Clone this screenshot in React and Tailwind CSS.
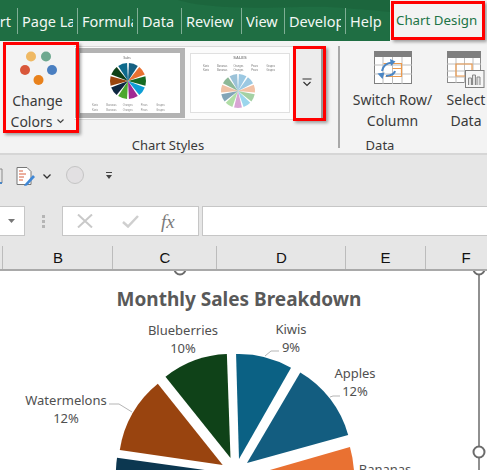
import React from "react";

const pt = (cx, cy, r, deg) => {
  const a = (deg * Math.PI) / 180;
  return [cx + r * Math.sin(a), cy - r * Math.cos(a)];
};
const slice = (cx, cy, r, a0, a1) => {
  const [x0, y0] = pt(cx, cy, r, a0);
  const [x1, y1] = pt(cx, cy, r, a1);
  return `M${cx} ${cy}L${x0.toFixed(2)} ${y0.toFixed(2)}A${r} ${r} 0 0 1 ${x1.toFixed(2)} ${y1.toFixed(2)}Z`;
};

const tabs = [
  { t: "Insert", w: "w-[18px]", first: true },
  { t: "Page Layout", w: "w-[60px]" },
  { t: "Formulas", w: "w-[60px]" },
  { t: "Data", w: "w-[44px]" },
  { t: "Review", w: "w-[60px]" },
  { t: "View", w: "w-[43px]" },
  { t: "Developer", w: "w-[61px]" },
  { t: "Help", w: "w-[45px]" },
];

function MiniPie({ cx, cy, r, colors, striped }) {
  const n = colors.length;
  const gap = 6;
  return colors.map((c, i) => {
    const a0 = (i * 360) / n + gap / 2;
    const a1 = ((i + 1) * 360) / n - gap / 2;
    return <path key={i} d={slice(cx, cy, r, a0, a1)} fill={c} opacity={striped ? 0.7 : 1} />;
  });
}

const legend = ["Kiwis", "Bananas", "Oranges", "Pears", "Grapes"];

function Thumb1() {
  return (
    <svg width="98" height="60" viewBox="82 55 98 60" className="block">
      <g filter="url(#b1)">
        <text x="128" y="60" fontSize="3" textAnchor="middle" fill="#666" fontFamily="Liberation Sans, sans-serif">Sales</text>
        <MiniPie cx={129} cy={82} r={18} colors={["#156082", "#e97132", "#196b24", "#0f9ed5", "#a02b93", "#4ea72e", "#0e2841", "#9a4410", "#0f4018", "#0d6a8c"]} />
        {legend.map((t, i) => (
          <g key={t} fontSize="2.6" fill="#888" textAnchor="middle" fontFamily="Liberation Sans, sans-serif">
            <text x={96 + i * 16.4} y="107">{t}</text>
            <text x={96 + i * 16.4} y="112">{t}</text>
          </g>
        ))}
      </g>
    </svg>
  );
}

function Thumb2() {
  return (
    <svg width="98" height="58" viewBox="191 56 98 58" className="block">
      <g filter="url(#b1)">
        <text x="240" y="61" fontSize="4" fontWeight="700" textAnchor="middle" fill="#8a8a8a" fontFamily="Liberation Sans, sans-serif">SALES</text>
        {legend.map((t, i) => (
          <g key={t} fontSize="2.6" fill="#777" textAnchor="middle" fontFamily="Liberation Sans, sans-serif">
            <text x={206 + i * 16.2} y="69">{t}</text>
            <text x={206 + i * 16.2} y="73">{t}</text>
          </g>
        ))}
        <MiniPie cx={238} cy={93} r={17} striped colors={["#6fb0d6", "#6fb0d6", "#eda77f", "#7dbd7d", "#70c4e6", "#c77fc2", "#8fcf80", "#4f7f99", "#e8a67f", "#5d9a6b", "#6fa8c8"]} />
      </g>
    </svg>
  );
}

function SwitchIcon() {
  return (
    <svg width="38" height="33" viewBox="0 0 38 33" className="block">
      <rect x="0.5" y="0.5" width="37" height="32" fill="#fff" stroke="#7f7f7f" />
      <rect x="0" y="0" width="38" height="6" fill="#7f7f7f" />
      <path d="M0 14H38M0 23H38M9 6V33M18.500 6V33M28 6V33" stroke="#bdbdbd" fill="none" />
      <path d="M9.500 12.500H27.500V25.500H11.500M18.500 17.500H27.500" stroke="#ed9a4c" strokeWidth="1.200" fill="none" />
      <path d="M8 20C9 15 13 12 18 11.500" stroke="#4a86c5" strokeWidth="2" fill="none" />
      <path d="M16 8L21.500 10.500L17 15Z" fill="#4a86c5" />
      <path d="M21 20C20.500 23 17 24.500 12 25" stroke="#4a86c5" strokeWidth="2" fill="none" />
      <path d="M4.500 20.500L11.500 19.500L9.500 26Z" fill="#4a86c5" transform="translate(-1 2)" />
    </svg>
  );
}

function SelectIcon() {
  return (
    <svg width="38" height="37" viewBox="0 0 38 37" className="block">
      <rect x="0.500" y="0.500" width="33" height="31" fill="#fff" stroke="#8a8a8a" />
      <rect x="0" y="0" width="34" height="7" fill="#7f7f7f" />
      <path d="M0 13H34M0 20H34M0 26H34M9 7V32M17.500 7V32M26 7V32" stroke="#bdbdbd" fill="none" />
      <path d="M9 13H25V25H9Z" stroke="#ed9a4c" strokeWidth="1.200" fill="none" />
      <rect x="18.500" y="19.500" width="18.500" height="17" fill="#f6f6f6" stroke="#7f7f7f" />
      <path d="M21.500 34V27H24.500V34M25.500 34V24H28.500V34M30 34V26H33V34" stroke="#8a8a8a" fill="#e3e3e3" />
    </svg>
  );
}

function ColorsIcon() {
  return (
    <svg width="40" height="38" viewBox="0 0 40 38" className="block">
      <circle cx="13" cy="5.500" r="5" fill="#efb964" />
      <circle cx="28" cy="5.500" r="5" fill="#6ea88f" />
      <circle cx="7" cy="19" r="5" fill="#d9573a" />
      <circle cx="34" cy="19" r="5" fill="#4a7fc1" />
      <circle cx="20.500" cy="29" r="5" fill="#e8811c" />
    </svg>
  );
}

export default function App() {
  const chartFont = { fontFamily: "Noto Sans, sans-serif" };
  return (
    <div className="relative flex h-[471px] w-[487px] flex-col overflow-hidden bg-white font-['Noto_Sans',sans-serif]">
      <svg width="0" height="0" className="absolute">
        <filter id="b1"><feGaussianBlur stdDeviation="0.3" /></filter>
      </svg>

      {/* tab strip */}
      <div className="relative flex h-[41px] shrink-0 items-center bg-[#1f6e43] text-[14.5px] text-[#f2f7f4]">
        <svg width="487" height="41" className="absolute left-0 top-0">
          <path d="M178 0C200 7 240 9 300 7C325 6 345 8 391 12V0Z" fill="#1a6039" opacity="0.55" />
        </svg>
        {tabs.map((t) => (
          <div key={t.t} className={`relative h-[26px] shrink-0 overflow-hidden whitespace-nowrap border-r border-[#7fae95] leading-[26px] ${t.w} ${t.first ? "flex justify-end pr-[6px]" : "pl-[4px] pr-[4px]"}`}>
            <span className={t.first ? "" : "block overflow-hidden"}>{t.t}</span>
          </div>
        ))}
        <div className="relative ml-[-1px] flex h-[41px] flex-1 items-center bg-[#f3f3f3] pl-[6px] text-[13.3px] text-[#217346]">
          <span className="whitespace-nowrap">Chart Design</span>
        </div>
      </div>

      {/* ribbon */}
      <div className="flex h-[114px] shrink-0 border-b-2 border-[#d6d6d6] bg-[#f3f3f3] text-[14px] leading-[21px] text-[#3a3a3a]">
        <div className="flex w-[75px] shrink-0 flex-col items-center pt-[10px]">
          <ColorsIcon />
          <div className="mt-[1px] text-center">Change</div>
          <div className="flex items-center gap-[5px] text-center">
            Colors
            <svg width="7" height="5" viewBox="0 0 7 5"><path d="M0.500 0.500L3.500 3.500L6.500 0.500" stroke="#444" fill="none" strokeWidth="1.200" /></svg>
          </div>
        </div>
        <div className="my-[5px] flex w-[265px] shrink-0 flex-col border-r-2 border-[#a8a8a8]">
          <div className="flex h-[76px] shrink-0">
            <div className="ml-[-1px] flex h-[74px] w-[219px] shrink-0 items-center gap-[5px] border-y border-[#d9d9d9] bg-[#fbfbfb] pl-[1px]">
              <div className="h-[70px] w-[110px] shrink-0 border-[5px] border-[#b3b3b3] bg-white p-[1px]">
                <Thumb1 />
              </div>
              <div className="border border-[#e0e0e0] bg-white">
                <Thumb2 />
              </div>
            </div>
            <div className="relative flex h-[74px] w-[30px] items-center justify-center border-b-2 border-r-2 border-[#9a9a9a] bg-[#ececec]">
              <svg width="10" height="9" viewBox="0 0 10 9"><path d="M0.500 1H9.500" stroke="#333" /><path d="M1.500 4L5 7.500L8.500 4" stroke="#333" fill="none" strokeWidth="1.200" /></svg>
            </div>
          </div>
          <div className="mt-[13px] pr-[77px] text-center text-[13px]">Chart Styles</div>
        </div>
        <div className="flex flex-1 flex-col pt-[10px]">
          <div className="flex">
            <div className="flex w-[105px] shrink-0 flex-col items-center">
              <SwitchIcon />
              <div className="mt-[5px] whitespace-nowrap">Switch Row/</div>
              <div>Column</div>
            </div>
            <div className="flex w-[42px] shrink-0 flex-col items-center">
              <div className="ml-[2px] h-[38px] self-start"><SelectIcon /></div>
              <div className="whitespace-nowrap">Select</div>
              <div>Data</div>
            </div>
          </div>
          <div className="mt-[4px] pr-[67px] text-center text-[13px]">Data</div>
        </div>
      </div>

      {/* quick toolbar */}
      <div className="flex h-[51px] shrink-0 items-start bg-[#e6e6e6] pt-[12px]">
        <svg width="3" height="18" viewBox="0 0 3 18" className="mt-[1px] block"><path d="M0 1H2V15" stroke="#8a8a8a" fill="none" /><path d="M0 15H2" stroke="#4a86c5" strokeWidth="2" /></svg>
        <svg width="20" height="19" viewBox="0 0 20 19" className="ml-[13px] block">
          <path d="M1 0.500H11L15 4.500V17.500H1Z" fill="#fff" stroke="#777" />
          <path d="M3 4H7M3 7H10M3 10H8M3 13H7" stroke="#d9603f" />
          <path d="M9 17L17 8L19 10L11 18.500L8 19Z" fill="#3f87d6" />
        </svg>
        <svg width="8" height="5" viewBox="0 0 8 5" className="ml-[7px] mt-[7px] block"><path d="M0.500 0.500L4 4L7.500 0.500" stroke="#333" fill="none" strokeWidth="1.300" /></svg>
        <div className="ml-[15px] mt-[-1px] h-[18px] w-[18px] rounded-full border border-[#c4c4c4] bg-[#e2e0e2]"></div>
        <svg width="6" height="8" viewBox="0 0 6 8" className="ml-[22px] mt-[5px] block"><path d="M0 0.500H6" stroke="#444" /><path d="M0 3H6L3 7Z" fill="#444" /></svg>
      </div>

      {/* formula bar */}
      <div className="flex h-[30px] shrink-0 items-stretch bg-[#e6e6e6]">
        <div className="flex w-[25px] shrink-0 items-center justify-end border border-l-0 border-[#c6c6c6] bg-white pr-[9px]">
          <svg width="7" height="4" viewBox="0 0 7 4"><path d="M0 0H7L3.500 4Z" fill="#777" /></svg>
        </div>
        <div className="flex w-[37px] shrink-0 flex-col items-center justify-center gap-[2px] pr-[1px]">
          <div className="size-[3px] bg-[#b5b5b5]"></div>
          <div className="size-[3px] bg-[#b5b5b5]"></div>
          <div className="size-[3px] bg-[#b5b5b5]"></div>
        </div>
        <div className="flex w-[137px] shrink-0 items-center border border-[#c6c6c6] bg-white pl-[14px]">
          <svg width="16" height="14" viewBox="0 0 16 14"><path d="M1 0.500L15 13.500M15 0.500L1 13.500" stroke="#c9c9c9" strokeWidth="2" /></svg>
          <svg width="17" height="13" viewBox="0 0 17 13" className="ml-[29px]"><path d="M1 7L6 11.500L16 1" stroke="#cfcfcf" strokeWidth="2.500" fill="none" /></svg>
          <span className="ml-[22px] font-['Liberation_Serif',serif] text-[19px] italic leading-none text-[#7b7b7b]">fx</span>
        </div>
        <div className="ml-[3px] flex-1 border-y border-l border-[#c6c6c6] bg-white"></div>
      </div>

      {/* column headers */}
      <div className="flex h-[35px] shrink-0 items-end border-b-2 border-[#a9a9a9] bg-[#e6e6e6] font-['Liberation_Sans',sans-serif] text-[15px] leading-[23px] text-[#111]">
        <div className="h-[23px] w-[3px] shrink-0 border-r border-[#bcbcbc]"></div>
        {[["B", "w-[110px] pl-[1px]"], ["C", "w-[104px] pl-[1px]"], ["D", "w-[129px] pl-[1px]"], ["E", "w-[80px]"]].map(([c, w]) => (
          <div key={c} className={`h-[23px] shrink-0 border-r border-[#bcbcbc] text-center ${w}`}>{c}</div>
        ))}
        <div className="h-[23px] w-[80px] shrink-0 text-center">F</div>
      </div>

      {/* sheet with chart */}
      <div className="relative flex-1">
        <div className="pr-[9px] pt-[14px] text-center text-[19px] font-bold leading-[28px] text-[#595959]">Monthly Sales Breakdown</div>
        <svg width="487" height="199" viewBox="0 272 487 199" className="absolute left-0 top-0" style={chartFont}>
          <path d={slice(239, 460, 105, -1.6, 29.7)} fill="#0b6184" />
          <path d={slice(247, 464, 105, 30.5, 74.5)} fill="#135d80" />
          <path d={slice(230.500, 459, 104, -38.7, -2)} fill="#0f4218" />
          <path d={slice(222.700, 466, 104, -81.7, -38.6)} fill="#99440f" />
          <path d={slice(219, 473, 103, -120, -82)} fill="#0c3750" />
          <path d={slice(249, 477, 105, 74, 110)} fill="#e97132" />
          <path d="M109 405H119L132 413M279 352H271L265 357M340 397H333L330 398" stroke="#b5b5b5" fill="none" />
          <g fontSize="13" fill="#505050" textAnchor="middle">
            <text x="183" y="336">Blueberries</text>
            <text x="183" y="354">10%</text>
            <text x="291" y="335">Kiwis</text>
            <text x="291" y="353">9%</text>
            <text x="355" y="379">Apples</text>
            <text x="355" y="397">12%</text>
            <text x="66" y="406">Watermelons</text>
            <text x="66" y="424">12%</text>
            <text x="385" y="475">Bananas</text>
          </g>
          <path d="M479 272V471" stroke="#6b6b6b" strokeWidth="1.500" />
          <circle cx="479" cy="453" r="5.500" fill="#fff" stroke="#6b6b6b" strokeWidth="2" />
          <circle cx="479" cy="270" r="5.500" fill="#fff" stroke="#6b6b6b" strokeWidth="2" />
          <circle cx="180" cy="270" r="5.500" fill="#fff" stroke="#6b6b6b" strokeWidth="2" />
        </svg>
      </div>

      {/* red callouts */}
      <div className="absolute left-[3px] top-[42px] h-[91px] w-[76px] border-[3px] border-[#ff0000] shadow-[2px_2px_3px_rgba(0,0,0,0.35)]"></div>
      <div className="absolute left-[293px] top-[46px] h-[75px] w-[33px] border-[3px] border-[#ff0000] shadow-[2px_2px_3px_rgba(0,0,0,0.35)]"></div>
      <div className="absolute left-[391px] top-[1px] h-[39px] w-[94px] border-[3px] border-[#ff0000] shadow-[2px_2px_3px_rgba(0,0,0,0.35)]"></div>
    </div>
  );
}
